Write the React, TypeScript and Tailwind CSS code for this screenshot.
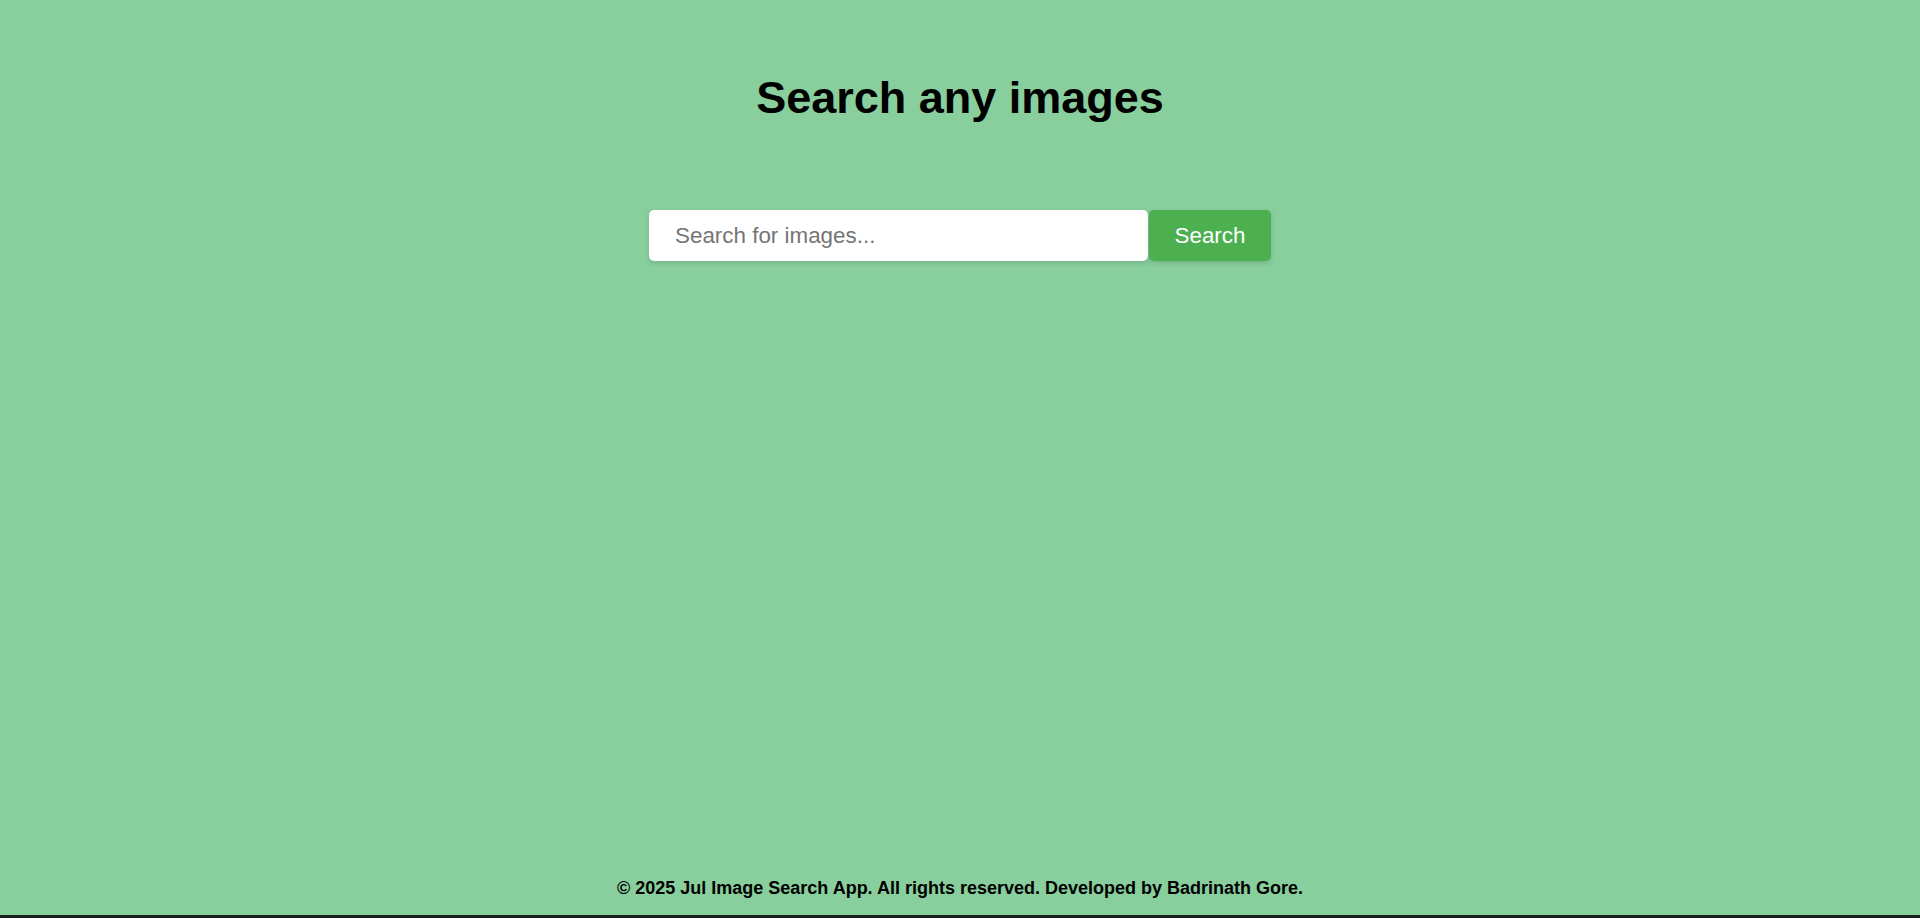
export default function App() {
  return (
    <div className="flex min-h-[918px] flex-col bg-[#88cf9d] font-['Liberation_Sans',Arial,sans-serif] text-black">
      <main className="flex flex-1 flex-col items-center pt-[72px]">
        <h1 className="text-[45px] leading-[52px] font-bold">Search any images</h1>

        <form className="mt-[86px] flex items-center" onSubmit={(e) => e.preventDefault()}>
          <input
            type="text"
            placeholder="Search for images..."
            className="h-[51px] w-[499px] rounded-[5px] bg-white pl-[26px] text-[22.4px] text-[#333] shadow-[0_2px_5px_rgba(0,0,0,0.15)] outline-none placeholder:text-[#757575]"
          />
          <button
            type="submit"
            className="ml-px h-[51px] w-[122px] rounded-[5px] bg-[#4caf50] text-[22.4px] text-white shadow-[0_2px_5px_rgba(0,0,0,0.15)]"
          >
            Search
          </button>
        </form>
      </main>

      <footer className="border-b-[3px] border-[#17201c] pb-[17px] text-center text-[18px] leading-[20px] font-bold">
        © 2025 Jul Image Search App. All rights reserved. Developed by Badrinath Gore.
      </footer>
    </div>
  );
}
